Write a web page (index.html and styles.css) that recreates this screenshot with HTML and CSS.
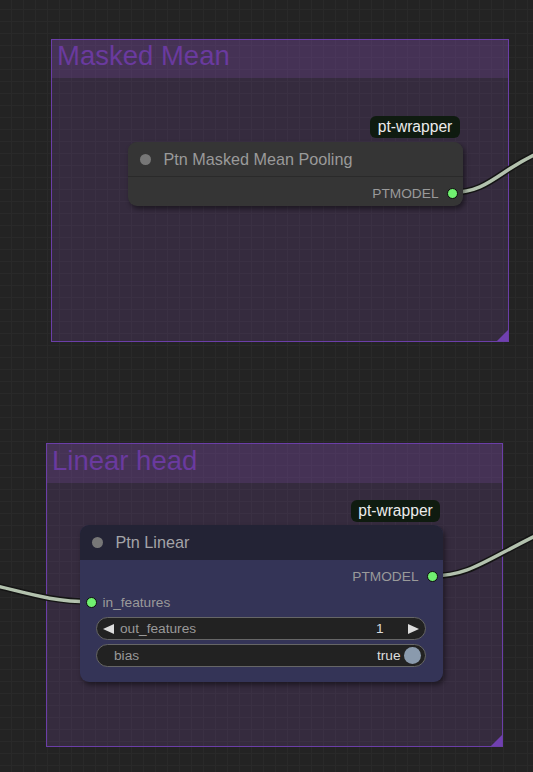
FILE: index.html
```html
<!DOCTYPE html>
<html>
<head>
<meta charset="utf-8">
<link rel="stylesheet" href="styles.css">
</head>
<body>
<div class="canvas">
  <div class="group g1">
    <div class="group-header"><span class="group-title">Masked Mean</span></div>
    <div class="corner"></div>
  </div>
  <div class="group g2">
    <div class="group-header"><span class="group-title">Linear head</span></div>
    <div class="corner"></div>
  </div>

  <svg class="wires" width="533" height="772" viewBox="0 0 533 772">
    <g fill="none" stroke-linecap="round">
      <path class="wire-edge" d="M452,192.5 C490,192.5 500,168 545,150"/>
      <path class="wire-core" d="M452,192.5 C490,192.5 500,168 545,150"/>
      <path class="wire-edge" d="M432,576 C470,576 485,560 545,531"/>
      <path class="wire-core" d="M432,576 C470,576 485,560 545,531"/>
      <path class="wire-edge" d="M-30,580 C20,590 45,601.7 91,601.7"/>
      <path class="wire-core" d="M-30,580 C20,590 45,601.7 91,601.7"/>
    </g>
  </svg>

  <div class="badge b1">pt-wrapper</div>
  <div class="node n1">
    <div class="node-title"><span class="title-dot"></span><span>Ptn Masked Mean Pooling</span></div>
    <div class="node-body">
      <div class="slot slot-out">PTMODEL<span class="slot-dot"></span></div>
    </div>
  </div>

  <div class="badge b2">pt-wrapper</div>
  <div class="node n2">
    <div class="node-title"><span class="title-dot"></span><span>Ptn Linear</span></div>
    <div class="node-body">
      <div class="slot slot-out">PTMODEL<span class="slot-dot"></span></div>
      <div class="slot slot-in"><span class="slot-dot"></span>in_features</div>
      <div class="widgets">
        <div class="widget">
          <span class="arrow arrow-left"></span>
          <span class="w-label">out_features</span>
          <span class="w-value">1</span>
          <span class="arrow arrow-right"></span>
        </div>
        <div class="widget toggle">
          <span class="w-label">bias</span>
          <span class="w-value">true</span>
          <span class="knob"></span>
        </div>
      </div>
    </div>
  </div>
</div>
</body>
</html>
```

FILE: styles.css
```css
html, body {
  margin: 0;
  padding: 0;
  background: #222222;
}

.canvas {
  position: relative;
  width: 533px;
  height: 772px;
  overflow: hidden;
  font-family: "Liberation Sans", Arial, sans-serif;
  background-color: #232323;
  background-image:
    linear-gradient(to right, #292929 1px, transparent 1px),
    linear-gradient(to bottom, #292929 1px, transparent 1px);
  background-size: 12px 12px;
  background-position: 11px 9px;
}

/* groups */
.group {
  position: absolute;
  box-sizing: border-box;
  border: 1px solid #6b3ea8;
  background: rgba(135, 80, 180, 0.19);
}
.g1 { left: 51px; top: 39px; width: 458px; height: 303px; }
.g2 { left: 46px; top: 443px; width: 457px; height: 304px; }

.group-header {
  display: flex;
  align-items: flex-start;
  background: rgba(135, 80, 180, 0.2);
  padding-left: 5px;
}
.g1 .group-header { height: 38px; }
.g2 .group-header { height: 39px; }

.group-title {
  font-size: 27.5px;
  line-height: 32px;
  color: #6a3a9f;
}
.g2 .group-title { line-height: 34px; }

.corner {
  position: absolute;
  right: 0;
  bottom: 0;
  width: 0;
  height: 0;
  border-left: 11px solid transparent;
  border-bottom: 11px solid #7040b0;
}

/* wires */
.wires {
  position: absolute;
  left: 0;
  top: 0;
}
.wire-edge { stroke: #141414; stroke-width: 6.5; }
.wire-core { stroke: #b3c2ae; stroke-width: 3.5; }

/* badges */
.badge {
  position: absolute;
  height: 22px;
  padding: 0 6px;
  box-sizing: border-box;
  display: flex;
  align-items: center;
  justify-content: center;
  background: #0f1b10;
  color: #ececec;
  font-size: 15.6px;
  border-radius: 6px;
}
.b1 { left: 370px; top: 116px; width: 90px; }
.b2 { left: 351px; top: 500px; width: 89px; }

/* nodes */
.node {
  position: absolute;
  box-sizing: border-box;
  border-radius: 9px;
  box-shadow: 2px 3px 5px rgba(0, 0, 0, 0.45);
  overflow: hidden;
}
.n1 { left: 128px; top: 142px; width: 335px; height: 64px; background: #353535; }
.n2 { left: 80px; top: 525px; width: 363px; height: 157px; background: #343457; }

.node-title {
  height: 35px;
  box-sizing: border-box;
  display: flex;
  align-items: center;
  gap: 13px;
  padding-left: 11.5px;
  font-size: 16.2px;
  color: #9a9a9a;
}
.n1 .node-title {
  background: #353535;
  border-bottom: 1px solid #2a2a2a;
}
.n2 .node-title {
  background: #232335;
  color: #a4a4a8;
}

.title-dot {
  width: 11px;
  height: 11px;
  border-radius: 50%;
  background: #777777;
  flex: none;
}

.node-body {
  display: flex;
  flex-direction: column;
}
.n1 .node-body { padding-top: 1px; }
.n2 .node-body { padding-top: 5px; }

.slot {
  height: 22px;
  display: flex;
  align-items: center;
  font-size: 13.7px;
  color: #9a9a9a;
}
.n1 .slot { height: 30px; }
.n2 .slot-in { margin-top: 4px; }

.slot-out {
  justify-content: flex-end;
  padding-right: 5.5px;
  gap: 8px;
}
.slot-in {
  padding-left: 5.5px;
  gap: 6px;
}
.slot-dot {
  width: 9px;
  height: 9px;
  border-radius: 50%;
  background: #70f070;
  border: 1px solid #0d0d0d;
  flex: none;
}

/* widgets */
.widgets {
  display: flex;
  flex-direction: column;
  gap: 4px;
  padding: 4px 17.5px 0 16px;
}
.widget {
  height: 23px;
  box-sizing: border-box;
  border: 1px solid #666666;
  border-radius: 12px;
  background: #222222;
  display: flex;
  align-items: center;
  font-size: 13.7px;
  padding: 0 6px 0 6px;
}
.w-label {
  color: #999999;
  flex: 1;
  margin-left: 6px;
}
.toggle .w-label { margin-left: 11px; }
.w-value {
  color: #dddddd;
}
.widget:not(.toggle) .w-value { margin-right: 24px; }

.arrow {
  width: 0;
  height: 0;
  border-top: 5.5px solid transparent;
  border-bottom: 5.5px solid transparent;
  flex: none;
}
.arrow-left { border-right: 11px solid #dddddd; }
.arrow-right { border-left: 11px solid #dddddd; }

.knob {
  width: 17px;
  height: 17px;
  border-radius: 50%;
  background: #8a9aad;
  margin-left: 3px;
  margin-right: -2px;
  flex: none;
}
```
